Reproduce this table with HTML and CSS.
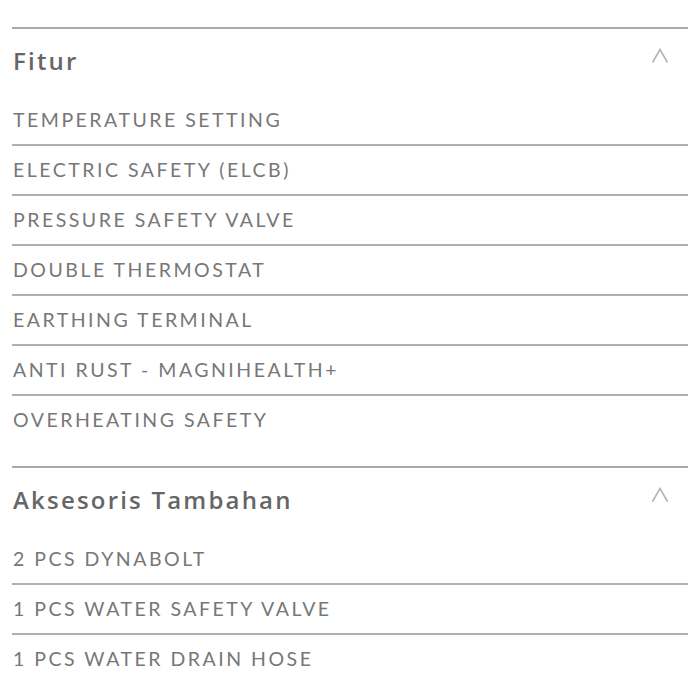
FILE: index.html
```html
<!DOCTYPE html>
<html>
<head>
<meta charset="utf-8">
<link rel="stylesheet" href="styles.css">
</head>
<body>
<div class="page">
  <section class="group">
    <div class="group-head">
      <h2 class="group-title">Fitur</h2>
      <svg class="chev" width="18" height="16" viewBox="0 0 18 16"><polyline points="1.5,14.5 9,1.5 16.5,14.5" fill="none" stroke="#b4b4b4" stroke-width="1.6"/></svg>
    </div>
    <ul class="items">
      <li>TEMPERATURE SETTING</li>
      <li>ELECTRIC SAFETY (ELCB)</li>
      <li>PRESSURE SAFETY VALVE</li>
      <li>DOUBLE THERMOSTAT</li>
      <li>EARTHING TERMINAL</li>
      <li>ANTI RUST - MAGNIHEALTH+</li>
      <li>OVERHEATING SAFETY</li>
    </ul>
  </section>
  <section class="group">
    <div class="group-head">
      <h2 class="group-title">Aksesoris Tambahan</h2>
      <svg class="chev" width="18" height="16" viewBox="0 0 18 16"><polyline points="1.5,14.5 9,1.5 16.5,14.5" fill="none" stroke="#b4b4b4" stroke-width="1.6"/></svg>
    </div>
    <ul class="items">
      <li>2 PCS DYNABOLT</li>
      <li>1 PCS WATER SAFETY VALVE</li>
      <li>1 PCS WATER DRAIN HOSE</li>
    </ul>
  </section>
</div>
</body>
</html>
```
FILE: styles.css
```css
html, body {
  margin: 0;
  padding: 0;
  background: #ffffff;
}
.page {
  padding: 27px 12px 0 12px;
  font-family: "Lato", "Open Sans", sans-serif;
}
.group {
  border-top: 2px solid #a9a9a9;
  margin-bottom: 22px;
}
.group-head {
  height: 67px;
  display: flex;
  align-items: center;
  justify-content: space-between;
  padding: 0 19px 0 1px;
}
.group-title {
  margin: -5px 0 0 0;
  font-family: "Open Sans", "Lato", sans-serif;
  font-size: 24px;
  font-weight: 600;
  color: #666666;
  letter-spacing: 2.2px;
}
.chev {
  display: block;
  margin-top: -14px;
}
.items {
  list-style: none;
  margin: 0;
  padding: 0;
}
.items li {
  height: 46px;
  padding: 0 0 2px 1px;
  display: flex;
  align-items: center;
  font-size: 19.5px;
  color: #777777;
  letter-spacing: 2.5px;
  border-bottom: 2px solid #b0b0b0;
}
.items li:last-child {
  border-bottom: none;
}
```
